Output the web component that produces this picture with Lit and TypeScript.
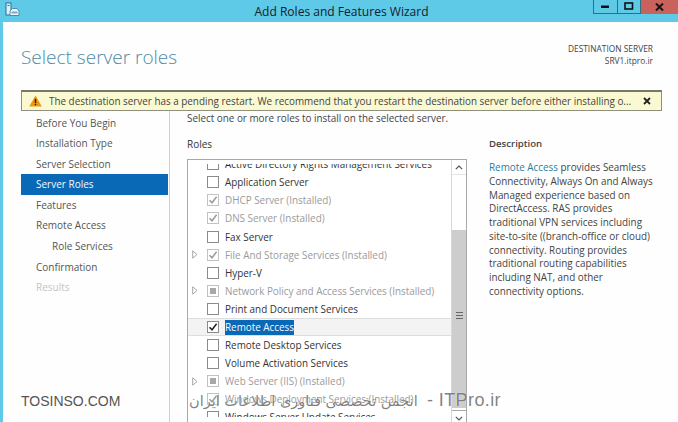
import { LitElement, html, css } from "lit";
import { customElement } from "lit/decorators.js";

type Role = { name: string; state: "off" | "on" | "done" | "partial"; muted?: boolean; arrow?: boolean; sel?: boolean };

const ROLES: Role[] = [
  { name: "Active Directory Rights Management Services", state: "off" },
  { name: "Application Server", state: "off" },
  { name: "DHCP Server (Installed)", state: "done", muted: true },
  { name: "DNS Server (Installed)", state: "done", muted: true },
  { name: "Fax Server", state: "off" },
  { name: "File And Storage Services (Installed)", state: "done", muted: true, arrow: true },
  { name: "Hyper-V", state: "off" },
  { name: "Network Policy and Access Services (Installed)", state: "partial", muted: true, arrow: true },
  { name: "Print and Document Services", state: "off" },
  { name: "Remote Access", state: "on", sel: true },
  { name: "Remote Desktop Services", state: "off" },
  { name: "Volume Activation Services", state: "off" },
  { name: "Web Server (IIS) (Installed)", state: "partial", muted: true, arrow: true },
  { name: "Windows Deployment Services (Installed)", state: "done", muted: true },
  { name: "Windows Server Update Services", state: "off" },
];

const NAV = [
  { t: "Before You Begin" },
  { t: "Installation Type" },
  { t: "Server Selection" },
  { t: "Server Roles", cls: "active" },
  { t: "Features" },
  { t: "Remote Access" },
  { t: "Role Services", cls: "sub" },
  { t: "Confirmation" },
  { t: "Results", cls: "dim" },
];

@customElement("app-root")
export class AppRoot extends LitElement {
  static styles = css`
    :host {
      display: block;
      width: 678px;
      height: 422px;
      overflow: hidden;
      position: relative;
      font-family: "Open Sans", "Noto Sans", sans-serif;
      font-size: 9.9px;
      color: #444;
      background: #5fc9e8;
    }
    .titlebar {
      height: 22px;
      position: relative;
      display: flex;
      align-items: center;
      justify-content: center;
      color: #15202b;
      font-size: 12.05px;
      padding-left: 5px;
      box-sizing: border-box;
    }
    .appicon { position: absolute; left: 5px; top: 2px; }
    .controls { position: absolute; right: 0; top: 0; display: flex; height: 14px; }
    .ctl {
      height: 14px;
      box-sizing: border-box;
      border: 1px solid #2f6f86;
      border-top: none;
      display: flex;
      align-items: center;
      justify-content: center;
    }
    .ctl.min { width: 25px; }
    .ctl.max { width: 23px; border-left: none; }
    .ctl.close { width: 37px; background: #c9615c; border: none; }
    .client {
      margin-left: 3px;
      height: 400px;
      background: #fefefe;
      display: flex;
      flex-direction: column;
    }
    .head {
      height: 68px;
      flex: none;
      box-sizing: border-box;
      padding: 0 25px 0 18px;
      display: flex;
      justify-content: space-between;
    }
    h1 {
      margin: 22px 0 0;
      font-size: 19px;
      font-weight: 300;
      color: #4f8aa6;
      line-height: 26px;
    }
    .dest {
      margin-top: 21px;
      text-align: right;
      font-size: 8.4px;
      line-height: 11.5px;
      color: #444;
    }
    .banner {
      flex: none;
      margin: 0 16px 0 18px;
      height: 21px;
      box-sizing: border-box;
      background: #fbf9d2;
      border: 1px solid #8f8f7e;
      border-top: 2px solid #77776a;
      display: flex;
      align-items: center;
      padding: 0 10px 0 7px;
      color: #444;
    }
    .banner svg.w { margin-right: 7px; flex: none; }
    .banner span { flex: 1; white-space: nowrap; overflow: hidden; }
    .main { flex: 1; display: flex; min-height: 0; }
    nav {
      width: 148px;
      margin-left: 18px;
      flex: none;
      padding-top: 1.5px;
      border-right: 1px solid #cfcfcf;
    }
    .nav-item {
      height: 20.6px;
      line-height: 20.6px;
      padding-left: 15px;
      margin-right: 1px;
      color: #555;
      white-space: nowrap;
      font-size: 10px;
    }
    .nav-item.active { background: #0a69b7; color: #f4fbff; }
    .nav-item.sub { padding-left: 31px; }
    .nav-item.dim { color: #c4c4c4; }
    .content {
      flex: 1;
      min-width: 0;
      display: flex;
      flex-direction: column;
      padding-left: 17px;
    }
    .intro { height: 16px; line-height: 15px; color: #444; white-space: nowrap; }
    .cols { flex: 1; display: flex; min-height: 0; margin-top: 10px; }
    .left { width: 280px; flex: none; display: flex; flex-direction: column; min-height: 0; }
    .label { height: 14px; line-height: 14px; font-weight: 600; color: #444; font-size: 9.6px; }
    .roles-label { font-weight: 400; color: #333; font-size: 10px; }
    .list {
      flex: 1;
      min-height: 0;
      margin-top: 8px;
      border: 1px solid #a9a9a9;
      border-bottom: none;
      background: #fff;
      display: flex;
    }
    .rows { flex: 1; min-width: 0; padding-top: 3.5px; }
    .rows-clip { height: 253.5px; overflow: hidden; }
    .rows-inner { margin-top: -8.4px; }
    .row {
      height: 18.1px;
      display: flex;
      align-items: center;
      color: #333;
      white-space: nowrap;
    }
    .row.muted { color: #9a9a9a; }
    .row.sel {
      background: #f3f3f3;
      box-shadow: inset 0 1px 0 #dedede, inset 0 -1px 0 #dedede;
    }
    .arrow { width: 19px; flex: none; display: flex; justify-content: center; padding-right: 6px; box-sizing: border-box; }
    .box {
      width: 12px;
      height: 12px;
      box-sizing: border-box;
      border: 1px solid #8b8b8b;
      background: #fff;
      flex: none;
      display: flex;
      align-items: center;
      justify-content: center;
      margin-right: 6px;
    }
    .box.muted { border-color: #c2c2c2; }
    .box i { width: 6px; height: 6px; background: #a8a8a8; display: block; }
    .hl { background: #0a69b7; color: #f6fbff; padding: 1px 0; line-height: 13px; }
    .sb {
      width: 14px;
      flex: none;
      border-left: 1px solid #d8d8d8;
      display: flex;
      flex-direction: column;
      background: #fff;
    }
    .sb-btn { height: 14px; flex: none; display: flex; align-items: center; justify-content: center; background: #fff; border-bottom: 1px solid #e4e4e4; }
    .sb-track { height: 55px; flex: none; }
    .sb-thumb { height: 178px; flex: none; box-sizing: border-box; padding-bottom: 8px; background: #cdcdcd; display: flex; align-items: center; justify-content: center; }
    .sb-btn.dn { border-bottom: none; border-top: 1px solid #a9a9a9; margin-top: 2px; }
    .grip { width: 7px; height: 7px; border-top: 1px solid #666; border-bottom: 1px solid #666; box-sizing: border-box; background: linear-gradient(#666, #666) center / 100% 1px no-repeat; }
    .right { margin-left: 22px; width: 168px; flex: none; }
    .desc { margin: 10px 0 0; line-height: 13.75px; color: #444; white-space: nowrap; }
    .desc a { color: #2a7f9e; text-decoration: none; }
    .wm1 {
      position: absolute;
      left: 21px;
      top: 392px;
      font-family: "Liberation Sans", sans-serif;
      font-size: 14px;
      line-height: 18px;
      color: #555;
      white-space: nowrap;
    }
    .wm2 {
      position: absolute;
      left: 189px;
      top: 390px;
      width: 312px;
      display: flex;
      justify-content: space-between;
      align-items: center;
      color: rgba(80, 80, 80, 0.72);
      text-shadow: 0 0 1px #fff;
      white-space: nowrap;
    }
    .wm2 .fa { font-family: "DejaVu Sans", sans-serif; font-size: 14.5px; direction: rtl; }
    .wm2 .en { font-family: "Liberation Sans", sans-serif; font-size: 18px; letter-spacing: 0.4px; }
  `;

  private box(r: Role) {
    const stroke = r.state === "on" ? "#222" : "#9a9a9a";
    return html`<span class="box ${r.muted ? "muted" : ""}">
      ${r.state === "partial" ? html`<i></i>` : ""}
      ${r.state === "on" || r.state === "done"
        ? html`<svg width="10" height="10" viewBox="0 0 10 10">
            <path d="M1.5 5.2 L4 7.8 L8.6 1.8" fill="none" stroke=${stroke} stroke-width="1.5" />
          </svg>`
        : ""}
    </span>`;
  }

  private row(r: Role) {
    return html`<div class="row ${r.muted ? "muted" : ""} ${r.sel ? "sel" : ""}">
      <span class="arrow">
        ${r.arrow
          ? html`<svg width="6" height="9" viewBox="0 0 6 9"><path d="M.7.8 L5 4.5 L.7 8.2 Z" fill="#fff" stroke="#a6a6a6" /></svg>`
          : ""}
      </span>
      ${this.box(r)}
      <span class=${r.sel ? "hl" : ""}>${r.name}</span>
    </div>`;
  }

  render() {
    return html`
      <div class="titlebar">
        <svg class="appicon" width="15" height="15" viewBox="0 0 15 15">
          <rect x="1" y="1" width="5" height="12" fill="#d9f2fa" stroke="#2a6f96" />
          <rect x="2.5" y="3" width="2" height="1" fill="#2a6f96" />
          <path d="M5 9 L7.5 6.5 H12 L14 9 V13.5 H5 Z" fill="#eef7fb" stroke="#4f8db0" />
          <rect x="6.5" y="9.5" width="6" height="2" fill="#7fa9c2" />
        </svg>
        Add Roles and Features Wizard
        <div class="controls">
          <div class="ctl min"><svg width="9" height="4" viewBox="0 0 9 4"><rect y="0.5" width="8" height="2.5" fill="#111" /></svg></div>
          <div class="ctl max"><svg width="10" height="9" viewBox="0 0 10 9"><rect x="1" y="1" width="7.5" height="6" fill="none" stroke="#111" stroke-width="1.6" /></svg></div>
          <div class="ctl close"><svg width="9" height="8" viewBox="0 0 9 8"><path d="M1 .5 L8 7.5 M8 .5 L1 7.5" stroke="#1a1414" stroke-width="2" /></svg></div>
        </div>
      </div>
      <div class="client">
        <div class="head">
          <h1>Select server roles</h1>
          <div class="dest">DESTINATION SERVER<br />SRV1.itpro.ir</div>
        </div>
        <div class="banner">
          <svg class="w" width="13" height="12" viewBox="0 0 13 12">
            <path d="M6.5 .5 L12.8 11.5 H.2 Z" fill="#f2960f" />
            <rect x="5.8" y="3.8" width="1.4" height="4.2" fill="#2a1c05" />
            <rect x="5.8" y="8.8" width="1.4" height="1.4" fill="#2a1c05" />
          </svg>
          <span>The destination server has a pending restart. We recommend that you restart the destination server before either installing o...</span>
          <svg width="8" height="8" viewBox="0 0 8 8"><path d="M1 1 L7 7 M7 1 L1 7" stroke="#222" stroke-width="1.8" /></svg>
        </div>
        <div class="main">
          <nav>
            ${NAV.map((n) => html`<div class="nav-item ${n.cls ?? ""}">${n.t}</div>`)}
          </nav>
          <div class="content">
            <div class="intro">Select one or more roles to install on the selected server.</div>
            <div class="cols">
              <div class="left">
                <div class="label roles-label">Roles</div>
                <div class="list">
                  <div class="rows">
                    <div class="rows-clip">
                      <div class="rows-inner">${ROLES.map((r) => this.row(r))}</div>
                    </div>
                  </div>
                  <div class="sb">
                    <div class="sb-btn"><svg width="8" height="5" viewBox="0 0 8 5"><path d="M.8 4.2 L4 1 L7.2 4.2" fill="none" stroke="#555" stroke-width="1.2" /></svg></div>
                    <div class="sb-track"></div>
                    <div class="sb-thumb"><span class="grip"></span></div>
                    <div class="sb-btn dn"><svg width="8" height="5" viewBox="0 0 8 5"><path d="M.8 .8 L4 4 L7.2 .8" fill="none" stroke="#555" stroke-width="1.2" /></svg></div>
                  </div>
                </div>
              </div>
              <div class="right">
                <div class="label">Description</div>
                <p class="desc"><a>Remote Access</a> provides Seamless<br />Connectivity, Always On and Always<br />Managed experience based on<br />DirectAccess. RAS provides<br />traditional VPN services including<br />site-to-site ((branch-office or cloud)<br />connectivity. Routing provides<br />traditional routing capabilities<br />including NAT, and other<br />connectivity options.</p>
              </div>
            </div>
          </div>
        </div>
      </div>
      <div class="wm1">TOSINSO.COM</div>
      <div class="wm2"><span class="fa">انجمن تخصصی فناوری اطلاعات ایران</span><span class="en">- ITPro.ir</span></div>
    `;
  }
}
